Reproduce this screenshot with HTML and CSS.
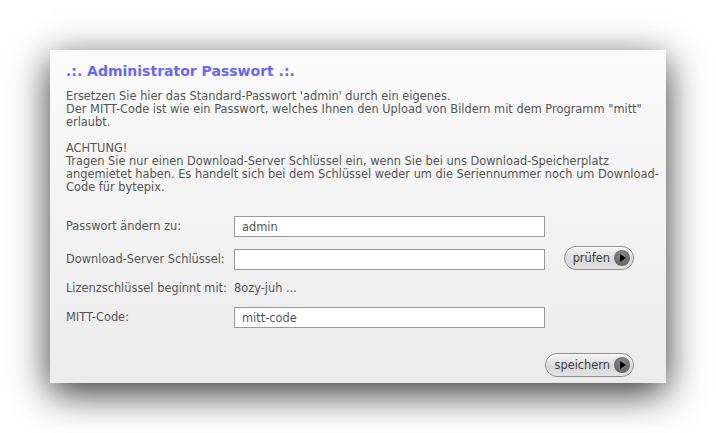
FILE: index.html
```html
<!DOCTYPE html>
<html>
	<head>
		<meta charset="utf-8">
		<title>Administrator Passwort</title>
		<link rel="stylesheet" href="styles.css">
	</head>
	<body>
		<!-- Panel mit Schatten -->
		<div id="panel">
			<h1 class="title">.:. Administrator Passwort .:.</h1>
			<p class="info">
				Ersetzen Sie hier das Standard-Passwort 'admin' durch ein eigenes.<br>
				Der MITT-Code ist wie ein Passwort, welches Ihnen den Upload von Bildern mit dem Programm "mitt" erlaubt.
			</p>
			<p class="info">
				ACHTUNG!<br>
				Tragen Sie nur einen Download-Server Schlüssel ein, wenn Sie bei uns Download-Speicherplatz angemietet haben. Es handelt sich bei dem Schlüssel weder um die Seriennummer noch um Download-Code für bytepix.
			</p>
			<div class="form">
				<label>Passwort ändern zu:</label>
				<input type="text" value="admin">
				<span></span>

				<label>Download-Server Schlüssel:</label>
				<input type="text" value="">
				<a class="btn" href="javascript:void(0);">prüfen<i></i></a>

				<label>Lizenzschlüssel beginnt mit:</label>
				<span class="value">8ozy-juh ...</span>
				<span></span>

				<label>MITT-Code:</label>
				<input type="text" value="mitt-code">
				<span></span>
			</div>
			<div class="footer">
				<a class="btn" href="javascript:void(0);">speichern<i></i></a>
			</div>
		</div>
	</body>
</html>
```

FILE: styles.css
```css
* {
	padding: 0;
	margin: 0;
	box-sizing: border-box;
}
html,
body {
	height: 100%;
}
body {
	background-color: #FFFFFF;
	font-family: "DejaVu Sans", Verdana, sans-serif;
	font-size: 11.4px;
	color: #555555;
	padding: 50px 0 0 50px;
}
#panel {
	width: 616px;
	height: 333px;
	padding: 13px 6px 0 16px;
	background: linear-gradient(#FAFAFA, #EBEBEB);
	box-shadow: 0 10px 36px rgba(0, 0, 0, 0.8);
}
.title {
	font-size: 14px;
	font-weight: bold;
	color: #6868F8;
	line-height: 17px;
	margin-bottom: 10px;
}
.info {
	line-height: 13px;
	margin-bottom: 13px;
}
.form {
	display: grid;
	grid-template-columns: 168px 311px 1fr;
	align-items: center;
	row-gap: 12px;
	margin-top: 22px;
}
.form input {
	height: 21px;
	border: 1px solid #999999;
	background-color: #FFFFFF;
	font-family: inherit;
	font-size: 11.4px;
	color: #555555;
	padding: 0 7px;
	outline: none;
}
.form label,
.form .value {
	line-height: 13px;
}
.btn {
	display: inline-flex;
	align-items: center;
	height: 24px;
	padding: 0 3px 0 8px;
	border: 1px solid #8E8E8E;
	border-radius: 12px;
	background: linear-gradient(#F4F4F4, #D8D8D8 60%, #E2E2E2);
	box-shadow: inset 0 1px 0 #FFFFFF;
	color: #3C3C3C;
	text-decoration: none;
	font-size: 11.4px;
}
.btn i {
	/* runder Pfeil-Knopf */
	width: 16px;
	height: 16px;
	margin-left: 4px;
	border-radius: 50%;
	background: radial-gradient(circle at 50% 35%, #8A8A8A, #5A5A5A);
	position: relative;
}
.btn i::after {
	content: "";
	position: absolute;
	left: 6px;
	top: 4px;
	border-left: 6px solid #000000;
	border-top: 4px solid transparent;
	border-bottom: 4px solid transparent;
}
.form .btn {
	justify-self: end;
	/* Knopf ragt 3px über das Feld */
	margin: -3px 26px 0 0;
}
.footer {
	display: flex;
	justify-content: flex-end;
	padding-right: 26px;
	margin-top: 25px;
}
```
